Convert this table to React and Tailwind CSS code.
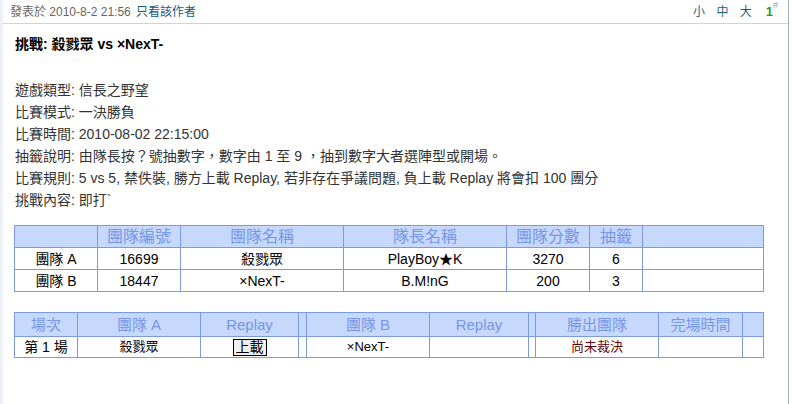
const FONT = "font-['Liberation_Sans','Noto_Sans_CJK_TC',sans-serif]"

const TEAMS = [
  { side: "團隊 A", id: "16699", name: "殺戮眾", leader: "PlayBoy★K", score: "3270", draw: "6" },
  { side: "團隊 B", id: "18447", name: "×NexT-", leader: "B.M!nG", score: "200", draw: "3" },
]

const INFO = [
  ["遊戲類型", "信長之野望"],
  ["比賽模式", "一決勝負"],
  ["比賽時間", "2010-08-02 22:15:00"],
  ["抽籤說明", "由隊長按？號抽數字，數字由 1 至 9 ，抽到數字大者選陣型或開場。"],
  ["比賽規則", "5 vs 5, 禁佚裝, 勝方上載 Replay, 若非存在爭議問題, 負上載 Replay 將會扣 100 團分"],
  ["挑戰內容", "即打`"],
]

const th = "border border-[#7b9ae0] bg-[#c6d9fc] text-[#7796e4] font-normal p-0 text-center leading-[18px]"
const td = "border border-[#7b9ae0] bg-white p-0 text-center leading-[18px]"

function TeamTable() {
  return (
    <table className="border-collapse table-fixed w-[749px] text-[14px] text-black">
      <colgroup>
        <col className="w-[83px]" />
        <col className="w-[83px]" />
        <col className="w-[163px]" />
        <col className="w-[163px]" />
        <col className="w-[83px]" />
        <col className="w-[53px]" />
        <col className="w-[121px]" />
      </colgroup>
      <thead>
        <tr className="h-[22px] text-[16px]">
          <th className={th}></th>
          <th className={th}>團隊編號</th>
          <th className={th}>團隊名稱</th>
          <th className={th}>隊長名稱</th>
          <th className={th}>團隊分數</th>
          <th className={th}>抽籤</th>
          <th className={th}></th>
        </tr>
      </thead>
      <tbody>
        {TEAMS.map((t) => (
          <tr key={t.id} className="h-[22px]">
            <td className={td}>{t.side}</td>
            <td className={td}>{t.id}</td>
            <td className={td}>{t.name}</td>
            <td className={td}>{t.leader}</td>
            <td className={td}>{t.score}</td>
            <td className={td}>{t.draw}</td>
            <td className={td}></td>
          </tr>
        ))}
      </tbody>
    </table>
  )
}

function MatchTable() {
  return (
    <table className="border-collapse table-fixed w-[749px] text-[13px] text-black">
      <colgroup>
        <col className="w-[63px]" />
        <col className="w-[123px]" />
        <col className="w-[98px]" />
        <col className="w-[8px]" />
        <col className="w-[123px]" />
        <col className="w-[99px]" />
        <col className="w-[7px]" />
        <col className="w-[123px]" />
        <col className="w-[84px]" />
        <col className="w-[21px]" />
      </colgroup>
      <thead>
        <tr className="h-[24px] text-[15px]">
          <th className={th}>場次</th>
          <th className={th}>團隊 A</th>
          <th className={th}>Replay</th>
          <th className={th}></th>
          <th className={th}>團隊 B</th>
          <th className={th}>Replay</th>
          <th className={th}></th>
          <th className={th}>勝出團隊</th>
          <th className={th}>完場時間</th>
          <th className={th}></th>
        </tr>
      </thead>
      <tbody>
        <tr className="h-[21px]">
          <td className={`${td} text-[14px]`}>第 1 場</td>
          <td className={td}>殺戮眾</td>
          <td className={td}>
            <span className="inline-block border border-black bg-[#f0f0f0] px-[2px] text-[14px] leading-[15px] align-middle">上載</span>
          </td>
          <td className={td}></td>
          <td className={td}>×NexT-</td>
          <td className={td}></td>
          <td className={td}></td>
          <td className={`${td} text-[#660000]`}>尚未裁決</td>
          <td className={td}></td>
          <td className={td}></td>
        </tr>
      </tbody>
    </table>
  )
}

export default function App() {
  return (
    <div className={`${FONT} flex w-[793px] h-[404px] bg-white overflow-hidden`}>
      <div className="w-[3px] shrink-0 bg-[#edf2f9]" />
      <div className="w-[786px] shrink-0 border-r border-[#a3acb8] flex flex-col">
        <div className="h-[24px] flex items-center justify-between border-b border-[#cfd4da] pl-[7px] pr-[10px] text-[12px]">
          <div className="text-[#666]">
            發表於 2010-8-2 21:56 <span className="text-[#17587f] ml-[2px]">只看該作者</span>
          </div>
          <div className="flex items-center">
            <span className="text-[#1e5f7a] tracking-[4px]">小 中 大</span>
            <span className="ml-[10px] text-[#2a9a2a] font-bold text-[13px]">1</span>
            <sup className="text-[#999] text-[9px] -mt-[4px]">#</sup>
          </div>
        </div>
        <div className="pl-[12px] pt-[11px] text-[14px] font-bold text-black leading-[18px]">
          挑戰: 殺戮眾 vs ×NexT-
        </div>
        <div className="pl-[12px] pt-[26px] text-[14px] text-[#333] leading-[22px]">
          {INFO.map(([k, v]) => (
            <div key={k}>
              {k}: {v}
            </div>
          ))}
        </div>
        <div className="pl-[11px] pt-[14px]">
          <TeamTable />
        </div>
        <div className="pl-[11px] pt-[20px]">
          <MatchTable />
        </div>
      </div>
    </div>
  )
}
